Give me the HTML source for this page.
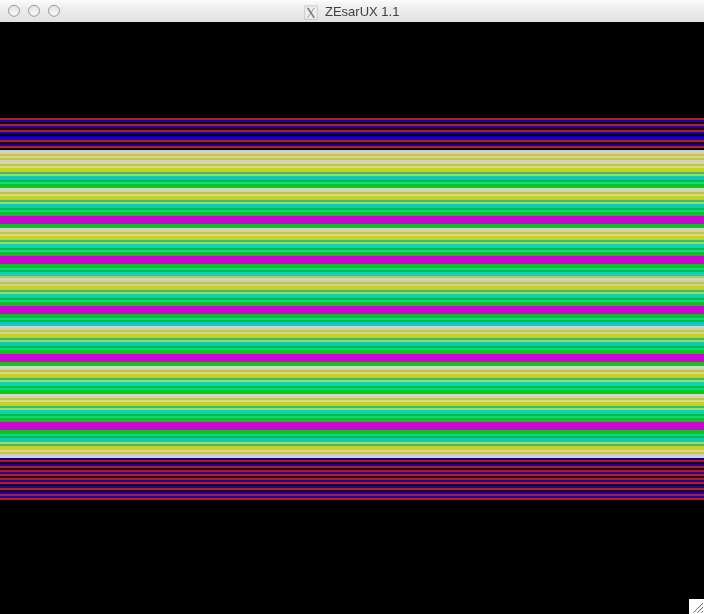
<!DOCTYPE html>
<html><head><meta charset="utf-8"><title>ZEsarUX 1.1</title>
<style>
html,body{margin:0;padding:0;background:#000;}
body{width:704px;height:614px;overflow:hidden;position:relative;font-family:"Liberation Sans","DejaVu Sans",sans-serif;}
#titlebar{position:absolute;left:0;top:0;width:704px;height:22px;background:linear-gradient(to bottom,#fcfcfc 0px,#f4f4f4 4px,#ececec 10px,#e6e6e6 17px,#e1e1e1 22px);}
.btn{position:absolute;top:5px;width:11px;height:11px;border-radius:50%;border:1px solid #9e9e9e;background:radial-gradient(circle at 50% 75%,#f8f8f8 0,#ececec 60%,#e2e2e2 100%);box-sizing:content-box;}
#title{position:absolute;left:325px;top:4px;font-size:13px;line-height:16px;color:#404040;will-change:transform;white-space:nowrap;letter-spacing:0;}
#xicon{position:absolute;left:304px;top:4.5px;width:14px;height:15px;}
#screen{position:absolute;left:0;top:22px;width:704px;height:592px;background:linear-gradient(to bottom,#000 0px,#000 94px,#000000 94px,#000000 95px,#100000 95px,#100000 96px,#a0282c 96px,#a0282c 97px,#a02040 97px,#a02040 98px,#280088 98px,#280088 99px,#200890 99px,#200890 100px,#100028 100px,#100028 101px,#280018 101px,#280018 102px,#983030 102px,#983030 103px,#882848 103px,#882848 104px,#400080 104px,#400080 105px,#200088 105px,#200088 106px,#180030 106px,#180030 107px,#280018 107px,#280018 108px,#a02038 108px,#a02038 109px,#a02048 109px,#a02048 110px,#380080 110px,#380080 111px,#180880 111px,#180880 112px,#000038 112px,#000038 113px,#000040 113px,#000040 114px,#0800a0 114px,#0800a0 115px,#1000c0 115px,#1000c0 116px,#1800b8 116px,#1800b8 117px,#380090 117px,#380090 118px,#982050 118px,#982050 119px,#982030 119px,#982030 120px,#400010 120px,#400010 121px,#100028 121px,#100028 122px,#200078 122px,#200078 123px,#280080 123px,#280080 124px,#982850 124px,#982850 125px,#982838 125px,#982838 126px,#300008 126px,#300008 127px,#080000 127px,#080000 128px,#cbc6cc 128px,#cbc6cc 129px,#d3d1d0 129px,#d3d1d0 130px,#d1d3c0 130px,#d1d3c0 131px,#d3d59f 131px,#d3d59f 132px,#c5c359 132px,#c5c359 133px,#c7c44f 133px,#c7c44f 134px,#d9d881 134px,#d9d881 135px,#d7d981 135px,#d7d981 136px,#c1c74f 136px,#c1c74f 137px,#c0c55d 137px,#c0c55d 138px,#d4d3ab 138px,#d4d3ab 139px,#d4d1c4 139px,#d4d1c4 140px,#d4d3bc 140px,#d4d3bc 141px,#d3d79e 141px,#d3d79e 142px,#b9c552 142px,#b9c552 143px,#bbc648 143px,#bbc648 144px,#d9da80 144px,#d9da80 145px,#dcdb79 145px,#dcdb79 146px,#c8cd37 146px,#c8cd37 147px,#c8d020 147px,#c8d020 149px,#afd33b 149px,#afd33b 150px,#59b54d 150px,#59b54d 151px,#4cb85c 151px,#4cb85c 152px,#8ce06c 152px,#8ce06c 153px,#7fe37f 153px,#7fe37f 154px,#29c599 154px,#29c599 155px,#10c8b8 155px,#10c8b8 157px,#12ca9f 157px,#12ca9f 158px,#02ba59 158px,#02ba59 159px,#03bd4e 159px,#03bd4e 160px,#19d782 160px,#19d782 161px,#1ada78 161px,#1ada78 162px,#06c630 162px,#06c630 163px,#08c818 163px,#08c818 165px,#27bb30 165px,#27bb30 166px,#ade9a8 166px,#ade9a8 167px,#cedbbe 167px,#cedbbe 168px,#ced5b6 168px,#ced5b6 169px,#d2d59f 169px,#d2d59f 170px,#bebf5d 170px,#bebf5d 171px,#c0c152 171px,#c0c152 172px,#d8db7e 172px,#d8db7e 173px,#d9de75 173px,#d9de75 174px,#c7ce3b 174px,#c7ce3b 175px,#c8d028 175px,#c8d028 177px,#afd341 177px,#afd341 178px,#59b54f 178px,#59b54f 179px,#4cb85c 179px,#4cb85c 180px,#8ce06c 180px,#8ce06c 181px,#7fe37f 181px,#7fe37f 182px,#29c599 182px,#29c599 183px,#10c8b8 183px,#10c8b8 185px,#12ca9f 185px,#12ca9f 186px,#02ba59 186px,#02ba59 187px,#01bd4e 187px,#01bd4e 188px,#13d782 188px,#13d782 189px,#13d977 189px,#13d977 190px,#05c731 190px,#05c731 191px,#08c818 191px,#08c818 193px,#409e4e 193px,#409e4e 194px,#942e9e 194px,#942e9e 195px,#cc04d4 195px,#cc04d4 201px,#962ca0 201px,#962ca0 202px,#469854 202px,#469854 203px,#10c020 203px,#10c020 205px,#2db536 205px,#2db536 206px,#afe7aa 206px,#afe7aa 207px,#d0dabd 207px,#d0dabd 208px,#d4d2b3 208px,#d4d2b3 209px,#d9d199 209px,#d9d199 210px,#c7bf57 210px,#c7bf57 211px,#c5c14c 211px,#c5c14c 212px,#d7db7c 212px,#d7db7c 213px,#d5dd74 213px,#d5dd74 214px,#c7cf3c 214px,#c7cf3c 215px,#c8d028 215px,#c8d028 217px,#afd341 217px,#afd341 218px,#59b54f 218px,#59b54f 219px,#4cb85c 219px,#4cb85c 220px,#8ce06c 220px,#8ce06c 221px,#7ee47e 221px,#7ee47e 222px,#2acc9a 222px,#2acc9a 223px,#10d0b8 223px,#10d0b8 225px,#13d1a0 225px,#13d1a0 226px,#01bb58 226px,#01bb58 227px,#03bd4e 227px,#03bd4e 228px,#19d782 228px,#19d782 229px,#1cd87a 229px,#1cd87a 230px,#0cc036 230px,#0cc036 231px,#10c020 231px,#10c020 233px,#469854 233px,#469854 234px,#962ca0 234px,#962ca0 235px,#cc04d4 235px,#cc04d4 241px,#952d9f 241px,#952d9f 242px,#439b51 242px,#439b51 243px,#0cc41c 243px,#0cc41c 245px,#08c434 245px,#08c434 246px,#14d878 246px,#14d878 247px,#13d782 247px,#13d782 248px,#01bd4e 248px,#01bd4e 249px,#01bb58 249px,#01bb58 250px,#13d1a0 250px,#13d1a0 251px,#10d0b8 251px,#10d0b8 253px,#33c797 253px,#33c797 254px,#95d171 254px,#95d171 255px,#bac665 255px,#bac665 256px,#d2d6a3 256px,#d2d6a3 257px,#d4d4b7 257px,#d4d4b7 258px,#d0d0b1 258px,#d0d0b1 259px,#cfd39b 259px,#cfd39b 260px,#b9c55d 260px,#b9c55d 261px,#bcc656 261px,#bcc656 262px,#d4d282 262px,#d4d282 263px,#d7d379 263px,#d7d379 264px,#c9cd3f 264px,#c9cd3f 265px,#c8d028 265px,#c8d028 267px,#afd341 267px,#afd341 268px,#59b54f 268px,#59b54f 269px,#4cb85c 269px,#4cb85c 270px,#8ce06c 270px,#8ce06c 271px,#81e37d 271px,#81e37d 272px,#2fc593 272px,#2fc593 273px,#16caae 273px,#16caae 274px,#12ceaa 274px,#12ceaa 275px,#12d093 275px,#12d093 276px,#02bc55 276px,#02bc55 277px,#01bd4e 277px,#01bd4e 278px,#13d782 278px,#13d782 279px,#15d779 279px,#15d779 280px,#0bc137 280px,#0bc137 281px,#10c020 281px,#10c020 283px,#469854 283px,#469854 284px,#962ca0 284px,#962ca0 285px,#cc04d4 285px,#cc04d4 291px,#962ca0 291px,#962ca0 292px,#469854 292px,#469854 293px,#10c020 293px,#10c020 295px,#0bc137 295px,#0bc137 296px,#15d779 296px,#15d779 297px,#13d782 297px,#13d782 298px,#01bd4e 298px,#01bd4e 299px,#02ba5b 299px,#02ba5b 300px,#12caa5 300px,#12caa5 301px,#10c8c0 301px,#10c8c0 303px,#32beb7 303px,#32beb7 304px,#aaded9 304px,#aaded9 305px,#cdd4cb 305px,#cdd4cb 306px,#cbd0bd 306px,#cbd0bd 307px,#cfd29c 307px,#cfd29c 308px,#c5c654 308px,#c5c654 309px,#c5c74d 309px,#c5c74d 310px,#d3d98b 310px,#d3d98b 311px,#d2da86 311px,#d2da86 312px,#c6ce42 312px,#c6ce42 313px,#c8d028 313px,#c8d028 315px,#aed442 315px,#aed442 316px,#52b44e 316px,#52b44e 317px,#46b85c 317px,#46b85c 318px,#8ae06c 318px,#8ae06c 319px,#7fe37f 319px,#7fe37f 320px,#29c599 320px,#29c599 321px,#10c8b8 321px,#10c8b8 323px,#12ca9f 323px,#12ca9f 324px,#02ba59 324px,#02ba59 325px,#01bd4e 325px,#01bd4e 326px,#13d782 326px,#13d782 327px,#13d977 327px,#13d977 328px,#05c731 328px,#05c731 329px,#08c818 329px,#08c818 331px,#409e4e 331px,#409e4e 332px,#942e9e 332px,#942e9e 333px,#cc04d4 333px,#cc04d4 339px,#982c9e 339px,#982c9e 340px,#4c984e 340px,#4c984e 341px,#18c018 341px,#18c018 343px,#33b530 343px,#33b530 344px,#b1e7a8 344px,#b1e7a8 345px,#cedbc1 345px,#cedbc1 346px,#ced5bf 346px,#ced5bf 347px,#d2d5a6 347px,#d2d5a6 348px,#bebf5a 348px,#bebf5a 349px,#c0c04e 349px,#c0c04e 350px,#d8d882 350px,#d8d882 351px,#d8da7a 351px,#d8da7a 352px,#c8ce3e 352px,#c8ce3e 353px,#c8d028 353px,#c8d028 355px,#aed442 355px,#aed442 356px,#52b44e 356px,#52b44e 357px,#47b75d 357px,#47b75d 358px,#91e173 358px,#91e173 359px,#85e585 359px,#85e585 360px,#2bcb9b 360px,#2bcb9b 361px,#10d0b8 361px,#10d0b8 363px,#12d19f 363px,#12d19f 364px,#02bf59 364px,#02bf59 365px,#00c14d 365px,#00c14d 366px,#0cd77b 366px,#0cd77b 367px,#0cd870 367px,#0cd870 368px,#04c830 368px,#04c830 369px,#08c818 369px,#08c818 371px,#27bb30 371px,#27bb30 372px,#ade9a8 372px,#ade9a8 373px,#cedbbf 373px,#cedbbf 374px,#ced5b9 374px,#ced5b9 375px,#d2d5a0 375px,#d2d5a0 376px,#bebf58 376px,#bebf58 377px,#bfc04d 377px,#bfc04d 378px,#d9dc83 378px,#d9dc83 379px,#d9de7b 379px,#d9de7b 380px,#c7ce3d 380px,#c7ce3d 381px,#c8d028 381px,#c8d028 383px,#aed442 383px,#aed442 384px,#52b44e 384px,#52b44e 385px,#47b75b 385px,#47b75b 386px,#91e16d 386px,#91e16d 387px,#84e47e 387px,#84e47e 388px,#2ccc9a 388px,#2ccc9a 389px,#10d0b8 389px,#10d0b8 391px,#13d1a0 391px,#13d1a0 392px,#01bb58 392px,#01bb58 393px,#00be4d 393px,#00be4d 394px,#0cd67b 394px,#0cd67b 395px,#0fd773 395px,#0fd773 396px,#09c135 396px,#09c135 397px,#10c020 397px,#10c020 399px,#469854 399px,#469854 400px,#962ca0 400px,#962ca0 401px,#cc04d4 401px,#cc04d4 407px,#962ca0 407px,#962ca0 408px,#469854 408px,#469854 409px,#10c020 409px,#10c020 411px,#0bc137 411px,#0bc137 412px,#15d779 412px,#15d779 413px,#13d782 413px,#13d782 414px,#01bd4e 414px,#01bd4e 415px,#02ba59 415px,#02ba59 416px,#12ca9f 416px,#12ca9f 417px,#10c8b8 417px,#10c8b8 419px,#2ac49a 419px,#2ac49a 420px,#86e486 420px,#86e486 421px,#92e074 421px,#92e074 422px,#4eb864 422px,#4eb864 423px,#59b553 423px,#59b553 424px,#afd33d 424px,#afd33d 425px,#c8d020 425px,#c8d020 427px,#c8ce38 427px,#c8ce38 428px,#d8da78 428px,#d8da78 429px,#d9d981 429px,#d9d981 430px,#c7c74f 430px,#c7c74f 431px,#c5c55d 431px,#c5c55d 432px,#d0d088 432px,#d0d088 433px,#d0d0c8 433px,#d0d0c8 434px,#d0d0e0 434px,#d0d0e0 435px,#d8d0ff 435px,#d8d0ff 436px,#100078 436px,#100078 437px,#200070 437px,#200070 438px,#902850 438px,#902850 439px,#902030 439px,#902030 440px,#380018 440px,#380018 441px,#100030 441px,#100030 442px,#200088 442px,#200088 443px,#300088 443px,#300088 444px,#902050 444px,#902050 445px,#a02830 445px,#a02830 446px,#300000 446px,#300000 447px,#380000 447px,#380000 448px,#982030 448px,#982030 449px,#982050 449px,#982050 450px,#380078 450px,#380078 451px,#380070 451px,#380070 452px,#982050 452px,#982050 453px,#a02838 453px,#a02838 454px,#380008 454px,#380008 455px,#380000 455px,#380000 456px,#a0282c 456px,#a0282c 457px,#982048 457px,#982048 458px,#380070 458px,#380070 460px,#982048 460px,#982048 461px,#a02840 461px,#a02840 462px,#300018 462px,#300018 463px,#100038 463px,#100038 464px,#180890 464px,#180890 465px,#300080 465px,#300080 466px,#a02040 466px,#a02040 467px,#a02830 467px,#a02830 468px,#300018 468px,#300018 469px,#100030 469px,#100030 470px,#200088 470px,#200088 471px,#400090 471px,#400090 472px,#902068 472px,#902068 473px,#902060 473px,#902060 474px,#380080 474px,#380080 476px,#982840 476px,#982840 477px,#a02828 477px,#a02828 478px,#280000 478px,#280000 479px,#080404 479px,#080404 480px,#000 480px,#000 100%);}
#grip{position:absolute;left:689px;top:599px;width:15px;height:15px;background:#fff;}
</style></head>
<body>
<div id="screen"></div>
<div id="titlebar">
<svg id="btns" width="70" height="22" viewBox="0 0 70 22" style="position:absolute;left:0;top:0"><defs><radialGradient id="bg" cx="50%" cy="75%" r="60%"><stop offset="0" stop-color="#f8f8f8"/><stop offset="1" stop-color="#e6e6e6"/></radialGradient></defs><circle cx="14" cy="10.8" r="5.5" fill="url(#bg)" stroke="#9c9c9c"/><circle cx="34" cy="10.8" r="5.5" fill="url(#bg)" stroke="#9c9c9c"/><circle cx="54" cy="10.8" r="5.5" fill="url(#bg)" stroke="#9c9c9c"/></svg>
<svg id="xicon" viewBox="0 0 14 15"><rect x="0.75" y="0.9" width="12.5" height="13.4" fill="#efefef" stroke="#c6c6c6" stroke-width="0.9"/><path d="M2.6 2.8 L4.6 2.8 L11.2 12.8 L9.2 12.8 Z" fill="#7c7c7c"/><path d="M10.4 2.8 L3.4 12.8" stroke="#808080" stroke-width="0.8" fill="none"/></svg>
<div id="title">ZEsarUX 1.1</div>
</div>
<svg id="grip" viewBox="0 0 15 15"><rect width="15" height="15" fill="#fff"/><path d="M4.3 13.7 L14 4 M8.3 13.7 L14 8 M12.3 13.7 L14 12" stroke="#444" stroke-width="0.75" fill="none"/><path d="M5.3 13.7 L14 5 M9.3 13.7 L14 9" stroke="#d8d8d8" stroke-width="0.6" fill="none"/></svg>
</body></html>
